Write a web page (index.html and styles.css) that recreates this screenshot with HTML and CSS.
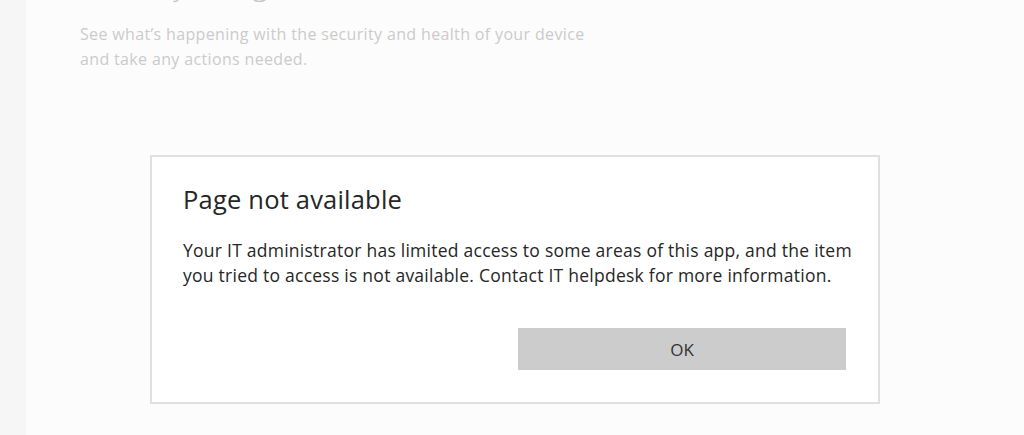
FILE: index.html
```html
<!DOCTYPE html>
<html lang="en">
<head>
<meta charset="utf-8">
<title>Windows Security</title>
<link rel="stylesheet" href="styles.css">
</head>
<body>
<div class="app">
  <nav class="rail"></nav>
  <main class="content">
    <h1 class="title">Security at a glance</h1>
    <p class="subtitle">See what’s happening with the security and health of your device<br>and take any actions needed.</p>
    <section class="dialog">
      <h2 class="dialog-title">Page not available</h2>
      <p class="dialog-text">Your IT administrator has limited access to some areas of this app, and the item<br>you tried to access is not available. Contact IT helpdesk for more information.</p>
      <div class="dialog-actions">
        <button class="btn">OK</button>
      </div>
    </section>
  </main>
</div>
</body>
</html>
```

FILE: styles.css
```css
* { box-sizing: border-box; }
html, body {
  margin: 0;
  padding: 0;
  width: 1024px;
  height: 435px;
  overflow: hidden;
  background: #fcfcfc;
  font-family: "Open Sans", "Noto Sans", sans-serif;
}
.app {
  display: flex;
  height: 435px;
}
.rail {
  width: 26px;
  flex: none;
  background: #f6f6f6;
}
.content {
  flex: 1;
  padding-left: 54px;
}
.title {
  margin: -36px 0 0;
  font-size: 30px;
  line-height: 40px;
  font-weight: 300;
  color: #c4c4c4;
  white-space: nowrap;
}
.subtitle {
  margin: 18px 0 0;
  font-size: 16px;
  letter-spacing: 0.35px;
  line-height: 24.5px;
  color: #cbcbcb;
}
.dialog {
  margin: 84px 0 0 70px;
  width: 730px;
  height: 249px;
  background: #fff;
  border: 2px solid #e0e0e0;
  padding: 25px 32px 0 31px;
}
.dialog-title {
  margin: 0;
  font-size: 25.5px;
  letter-spacing: 0.2px;
  line-height: 34px;
  font-weight: 400;
  color: #262626;
}
.dialog-text {
  margin: 22px 0 0;
  font-size: 17.5px;
  letter-spacing: 0.25px;
  line-height: 25px;
  color: #262626;
  white-space: nowrap;
}
.dialog-actions {
  display: flex;
  justify-content: flex-end;
  margin-top: 40px;
}
.btn {
  width: 328px;
  height: 42px;
  border: 0;
  background: #cccccc;
  color: #333;
  font-family: inherit;
  font-size: 17px;
}
```
